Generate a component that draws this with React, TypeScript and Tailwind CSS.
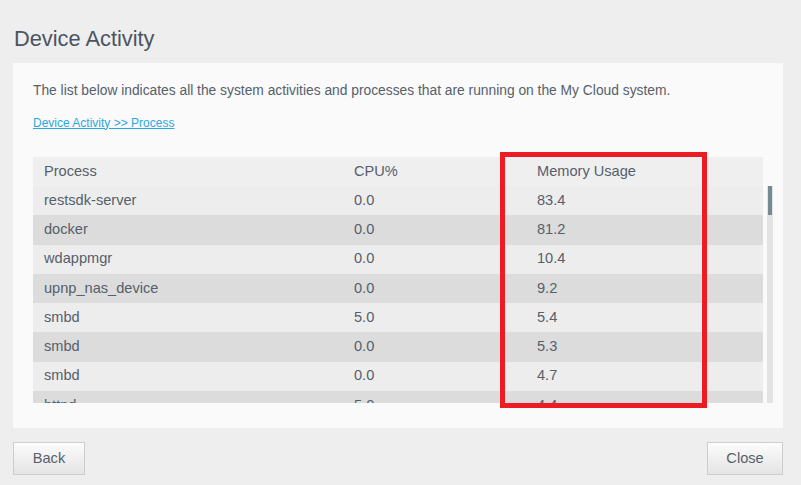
import React from "react";

const rows: [string, string, string][] = [
  ["restsdk-server", "0.0", "83.4"],
  ["docker", "0.0", "81.2"],
  ["wdappmgr", "0.0", "10.4"],
  ["upnp_nas_device", "0.0", "9.2"],
  ["smbd", "5.0", "5.4"],
  ["smbd", "0.0", "5.3"],
  ["smbd", "0.0", "4.7"],
  ["httpd", "5.0", "4.4"],
];

export default function App() {
  return (
    <div
      className="relative w-[801px] h-[485px] overflow-hidden bg-[#eeeeee] pl-[13px] pr-[18px] text-[#56606b]"
      style={{ fontFamily: '"Liberation Sans", Arial, sans-serif' }}
    >
      <h1 className="pt-[27px] pl-[1px] text-[21.8px] leading-[24px] text-[#4b5561] font-normal">
        Device Activity
      </h1>
      <div className="mt-[12px] h-[365px] bg-[#fafafa] pl-[20px] pr-[10px] pt-[18px]">
        <p className="text-[13.8px] leading-[20px]">
          The list below indicates all the system activities and processes that are running on the My Cloud system.
        </p>
        <a className="mt-[13.7px] block w-max text-[12px] leading-[16px] text-[#2aa8e2] underline" href="#">
          Device Activity &gt;&gt; Process
        </a>
        <div className="mt-[26.3px] flex flex-col text-[14.6px]">
          <div className="grid h-[29px] w-[730px] grid-cols-[310px_183px_1fr] items-center bg-[#efefef] pl-[11px]">
            <span>Process</span>
            <span>CPU%</span>
            <span>Memory Usage</span>
          </div>
          <div className="flex gap-[4px]">
            <div className="h-[217px] w-[730px] overflow-hidden">
              {rows.map((r, i) => (
                <div
                  key={i}
                  className={`grid h-[29.3px] grid-cols-[310px_183px_1fr] items-center pl-[11px] ${
                    i % 2 === 0 ? "bg-[#ededed]" : "bg-[#dcdcdc]"
                  }`}
                >
                  <span>{r[0]}</span>
                  <span>{r[1]}</span>
                  <span>{r[2]}</span>
                </div>
              ))}
            </div>
            <div className="h-[217px] w-[6px] bg-[#e3e3e3] px-[1px]">
              <div className="h-[29px] w-[4px] bg-[#768a92]" />
            </div>
          </div>
        </div>
      </div>
      <div className="mt-[14px] flex justify-between">
        <button className="h-[33px] w-[72px] border border-[#cdcdcd] bg-gradient-to-b from-[#fcfcfc] to-[#e4e4e4] text-[14.6px] text-[#56606b]">
          Back
        </button>
        <button className="h-[33px] w-[76px] border border-[#cdcdcd] bg-gradient-to-b from-[#fcfcfc] to-[#e4e4e4] text-[14.6px] text-[#56606b]">
          Close
        </button>
      </div>
      <div className="absolute left-[500px] top-[152px] h-[256px] w-[207px] border-[5px] border-[#ed1c24]" />
    </div>
  );
}
